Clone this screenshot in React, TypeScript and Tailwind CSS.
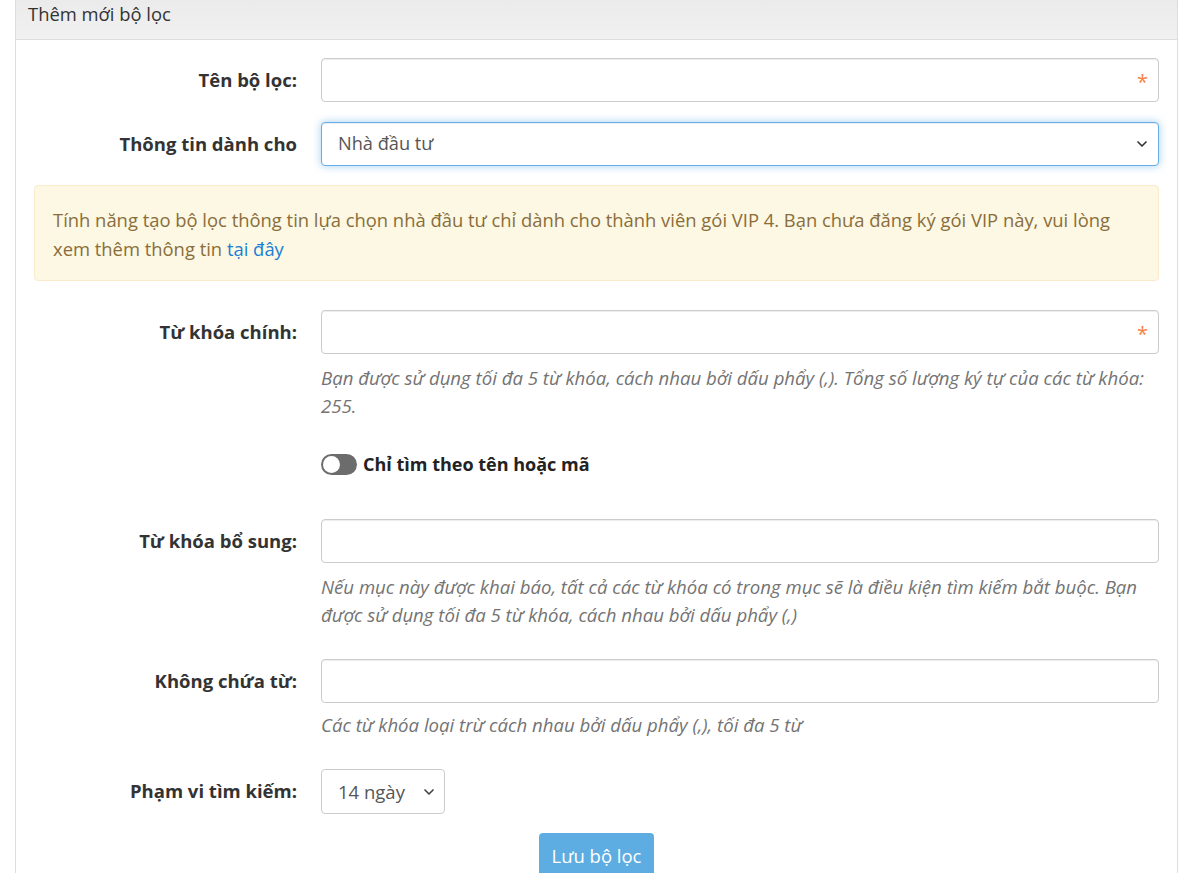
import { ChevronDown } from 'lucide-react';

const font = 'font-["Open_Sans","Noto_Sans",sans-serif]';

function Asterisk() {
  return (
    <span className="pointer-events-none absolute right-[11px] top-1/2 -translate-y-[40%] text-[20px] leading-none text-[#f7813c]">
      *
    </span>
  );
}

function Row({ label, children }: { label: string; children: React.ReactNode }) {
  return (
    <div className="flex items-start">
      <label className="w-[287px] shrink-0 pr-6 text-right text-[18.5px] font-bold leading-[44px] text-[#333]">
        {label}
      </label>
      <div className="flex-1">{children}</div>
    </div>
  );
}

function TextInput({ required }: { required?: boolean }) {
  return (
    <div className="relative">
      <input className="block h-[44px] w-full rounded-[4px] border border-[#ccc] bg-white px-4 text-[18px] text-[#555] outline-none shadow-[inset_0_1px_1px_rgba(0,0,0,0.075)]" />
      {required && <Asterisk />}
    </div>
  );
}

function Help({ children, tight }: { children: React.ReactNode; tight?: boolean }) {
  return (
    <p className={`${tight ? 'mt-[8px]' : 'mt-[10px]'} text-[18.6px] italic leading-[28px] text-[#737373]`}>{children}</p>
  );
}

export default function App() {
  return (
    <div className={`min-h-[873px] bg-white ${font}`}>
      <div className="mx-[15px] w-[1163px] border-x border-[#ddd]">
        <div className="h-[40px] border-b border-[#ddd] bg-gradient-to-b from-[#ebebeb] to-[#f1f1f1] px-3 text-[18.4px] leading-[27px] text-[#333]">
          Thêm mới bộ lọc
        </div>

        <div className="flex flex-col px-[18px] pt-[18px] pb-0">
          <Row label="Tên bộ lọc:">
            <TextInput required />
          </Row>

          <div className="mt-[20px]">
            <Row label="Thông tin dành cho">
              <div className="relative">
                <select className="block h-[44px] w-full appearance-none rounded-[4px] border border-[#66afe9] bg-white px-4 text-[18.2px] text-[#555] outline-none shadow-[inset_0_1px_1px_rgba(0,0,0,0.075),0_0_8px_rgba(102,175,233,0.6)]">
                  <option>Nhà đầu tư</option>
                </select>
                <ChevronDown className="pointer-events-none absolute right-[9px] top-1/2 h-[16px] w-[16px] -translate-y-1/2 text-[#333]" strokeWidth={2.5} />
              </div>
            </Row>
          </div>

          <div className="mt-[19px] rounded-[4px] border border-[#faebcc] bg-[#fcf8e3] px-[18px] pt-[19px] pb-[17px] text-[18.4px] leading-[29px] text-[#8a6d3b]">
            <span>
              Tính năng tạo bộ lọc thông tin lựa chọn nhà đầu tư chỉ dành cho thành viên gói VIP 4. Bạn chưa đăng ký gói VIP này, vui lòng xem thêm thông tin{' '}
            </span>
            <a className="text-[#1a7fd4]">tại đây</a>
          </div>

          <div className="mt-[29px]">
            <Row label="Từ khóa chính:">
              <TextInput required />
              <Help>
                Bạn được sử dụng tối đa 5 từ khóa, cách nhau bởi dấu phẩy (,). Tổng số lượng ký tự của các từ khóa: 255.
              </Help>
            </Row>
          </div>

          <div className="mt-[22px] flex h-[44px] items-center pl-[287px]">
            <span className="relative mr-[6px] inline-block h-[21px] w-[36px] rounded-full bg-[#6c6c6c]">
              <span className="absolute left-[2px] top-[2px] h-[17px] w-[17px] rounded-full bg-white" />
            </span>
            <span className="text-[18px] font-bold text-[#222]">Chỉ tìm theo tên hoặc mã</span>
          </div>

          <div className="mt-[33px]">
            <Row label="Từ khóa bổ sung:">
              <TextInput />
              <Help>
                Nếu mục này được khai báo, tất cả các từ khóa có trong mục sẽ là điều kiện tìm kiếm bắt buộc. Bạn được sử dụng tối đa 5 từ khóa, cách nhau bởi dấu phẩy (,)
              </Help>
            </Row>
          </div>

          <div className="mt-[30px]">
            <Row label="Không chứa từ:">
              <TextInput />
              <Help tight>Các từ khóa loại trừ cách nhau bởi dấu phẩy (,), tối đa 5 từ</Help>
            </Row>
          </div>

          <div className="mt-[30px]">
            <Row label="Phạm vi tìm kiếm:">
              <div className="relative w-[124px]">
                <select className="block h-[45px] w-full appearance-none rounded-[4px] border border-[#ccc] bg-white pl-4 pr-8 text-[18.5px] text-[#555] outline-none">
                  <option>14 ngày</option>
                </select>
                <ChevronDown className="pointer-events-none absolute right-[8px] top-1/2 h-[16px] w-[16px] -translate-y-1/2 text-[#444]" strokeWidth={2.5} />
              </div>
            </Row>
          </div>

          <div className="mt-[19px] flex justify-center">
            <button className="h-[46px] w-[115px] rounded-[4px] bg-[#5dade2] text-[18.5px] text-white">Lưu bộ lọc</button>
          </div>
        </div>
      </div>
    </div>
  );
}
